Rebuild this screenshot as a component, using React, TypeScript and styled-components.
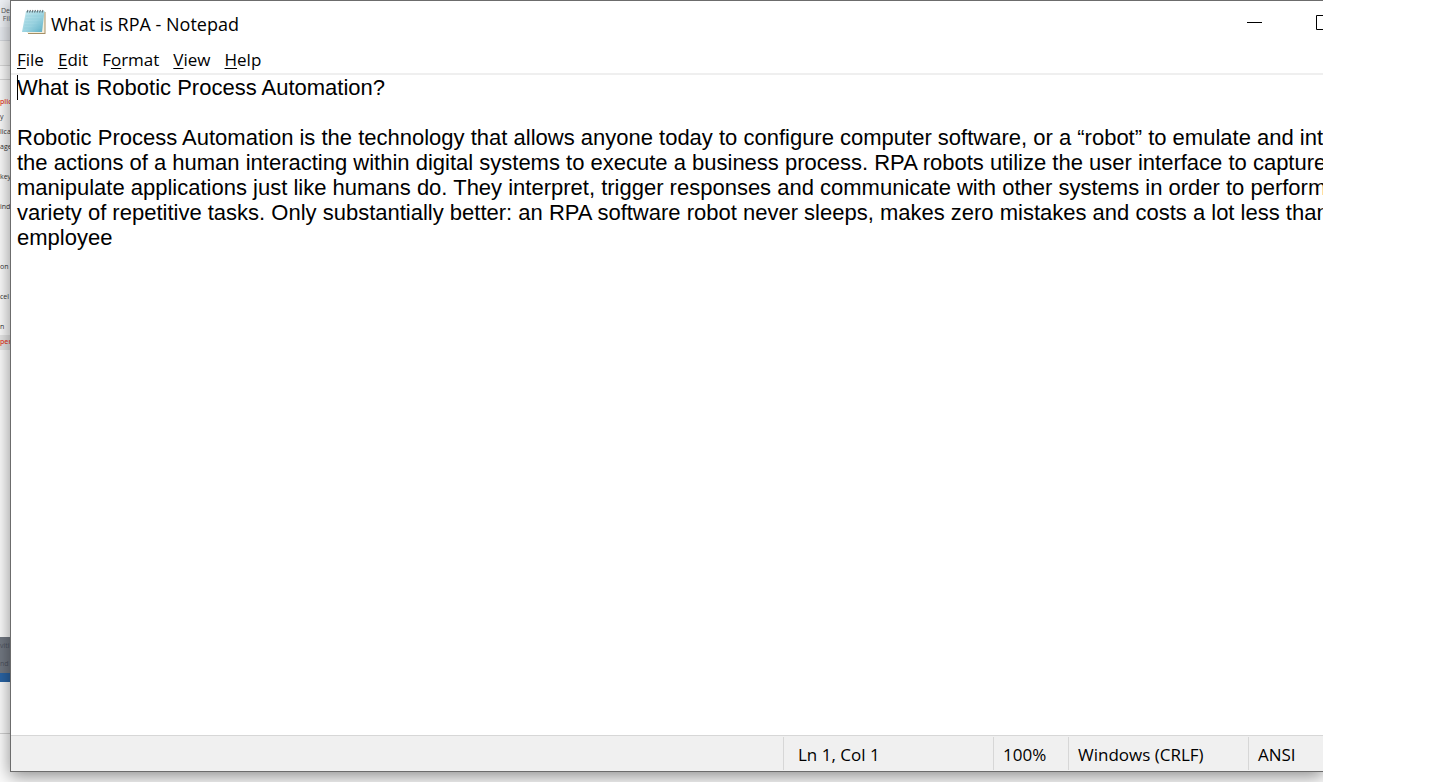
import React from "react";
import styled, { createGlobalStyle } from "styled-components";

const GlobalStyle = createGlobalStyle`
  *, *::before, *::after { box-sizing: border-box; }
  body { margin: 0; background: #fff; font-family: "Open Sans", "Noto Sans", sans-serif; color: #000; }
`;

const Desktop = styled.main`
  display: flex;
  min-height: 100vh;
  margin-right: 117px;
  padding-bottom: 10px;
  overflow: hidden;
  background: #fbfbfb;
`;

const Behind = styled.aside`
  flex: none;
  display: flex;
  flex-direction: column;
  width: 10px;
  margin-bottom: -10px;
  font-size: 7px;
  line-height: 14px;
  color: #333;
`;

const Ribbon = styled.div`
  height: 27px;
  padding-top: 7px;
  background: #eff2f6;
  line-height: 8px;
  text-align: right;
  color: #555;
  white-space: nowrap;
`;

const Strip = styled.div<{ $height: number; $tone?: string; $line?: string }>`
  flex: none;
  height: ${(p) => p.$height}px;
  background: ${(p) => p.$tone ?? "transparent"};
  border-bottom: 1px solid ${(p) => p.$line ?? "transparent"};
`;

const Items = styled.ul`
  flex: 1;
  margin: 0;
  padding: 15px 0 0;
  list-style: none;
`;

const Item = styled.li<{ $alert?: boolean; $active?: boolean }>`
  height: 15px;
  white-space: nowrap;
  color: ${(p) => (p.$alert ? "#e8402c" : "inherit")};
  font-weight: ${(p) => (p.$alert ? 600 : 400)};
  background: ${(p) => (p.$active ? "#e6e6e6" : "transparent")};
`;

const Panel = styled.div`
  flex: none;
  height: 45px;
  border-bottom: 9px solid #2a64a4;
  background: #727882;
  color: #4d535f;
  line-height: 18px;
`;

const Window = styled.section`
  position: relative;
  flex: 1;
  min-width: 0;
  display: flex;
  flex-direction: column;
  border: 1px solid #6c6c6c;
  border-right: 0;
  background: #fff;
  box-shadow: 0 4px 16px rgba(0, 0, 0, 0.45);
`;

const TitleBar = styled.header`
  display: flex;
  align-items: center;
  height: 46px;
  padding-left: 11px;
`;

const AppIcon = styled.svg`
  flex: none;
  align-self: flex-start;
  margin-top: 7px;
`;

const Title = styled.h1`
  flex: 1;
  margin: 0 0 0 4px;
  font-size: 18px;
  line-height: 24px;
  font-weight: 400;
  white-space: nowrap;
`;

const Controls = styled.div`
  align-self: flex-start;
  display: flex;
  width: 103px;
  height: 43px;
  overflow: hidden;
`;

const ControlButton = styled.button`
  flex: none;
  display: flex;
  align-items: center;
  width: 69px;
  padding: 0 0 0 27px;
  border: 0;
  background: transparent;
`;

const MenuBar = styled.nav`
  display: flex;
  gap: 14px;
  height: 28px;
  padding-left: 6px;
  border-bottom: 2px solid #efefef;
`;

const MenuButton = styled.button`
  padding: 0;
  border: 0;
  background: transparent;
  font: inherit;
  font-size: 17px;
  line-height: 26px;
  color: inherit;

  u { text-underline-offset: 2px; text-decoration-thickness: 1px; text-decoration-skip-ink: none; }
`;

const EditorArea = styled.div`
  position: relative;
  flex: 1;
  display: flex;
`;

const Editor = styled.textarea`
  flex: 1;
  min-width: 0;
  padding: 0 0 0 6px;
  border: 0;
  outline: 0;
  resize: none;
  overflow: hidden;
  background: transparent;
  font-family: "Liberation Sans", Arial, sans-serif;
  font-size: 22px;
  line-height: 25px;
  color: #000;
  white-space: pre;
`;

const Caret = styled.span`
  position: absolute;
  left: 6px;
  top: 0;
  width: 1px;
  height: 25px;
  background: #000;
`;

const StatusBar = styled.footer`
  display: flex;
  justify-content: flex-end;
  height: 36px;
  padding: 1px 0;
  border-top: 1px solid #d7d7d7;
  background: #f0f0f0;
`;

const StatusCell = styled.span<{ $width: number; $inset?: number }>`
  flex: none;
  width: ${(p) => p.$width}px;
  padding-left: ${(p) => p.$inset ?? 9}px;
  border-left: 1px solid #d7d7d7;
  font-size: 17px;
  line-height: 35px;
  white-space: nowrap;
`;

const NotepadIcon = () => (
  <AppIcon width="25" height="27" viewBox="0 0 25 27" aria-hidden="true">
    <defs>
      <linearGradient id="page" x1="0" y1="0" x2="1" y2="1">
        <stop offset="0" stopColor="#c4e8ef" />
        <stop offset="0.55" stopColor="#9bd3e0" />
        <stop offset="1" stopColor="#58acc4" />
      </linearGradient>
    </defs>
    <path d="M7 4h16.500v22H6z" fill="#a58f65" />
    <path d="M5 3h17.500v22H5z" fill="#f5efdc" />
    <path d="M4 3h18.500l-2.500 21H0z" fill="url(#page)" />
    <path d="M4 8h17.500M3.500 11h17.500M3 14h17.500M2.500 17h17.500M2 20h17.500" stroke="#86c6d5" strokeWidth=".4" />
    <path d="M5 4.500l1-2.500M7.500 4.500l1-2.500M10 4.500l1-2.500M12.500 4.500l1-2.500M15 4.500l1-2.500M17.500 4.500l1-2.500M20 4.500l1-2.500" stroke="#5f6e74" strokeWidth="1.100" />
  </AppIcon>
);

const sideItems = ["plic", "y", "lica", "age", "", "key", "", "ind", "", "", "", "on", "", "cel", "", "n", "per"];

const menus = [
  ["", "F", "ile"],
  ["", "E", "dit"],
  ["F", "o", "rmat"],
  ["", "V", "iew"],
  ["", "H", "elp"],
];

const documentText = `What is Robotic Process Automation?

Robotic Process Automation is the technology that allows anyone today to configure computer software, or a “robot” to emulate and integrate
the actions of a human interacting within digital systems to execute a business process. RPA robots utilize the user interface to capture data
manipulate applications just like humans do. They interpret, trigger responses and communicate with other systems in order to perform on
variety of repetitive tasks. Only substantially better: an RPA software robot never sleeps, makes zero mistakes and costs a lot less than an
employee`;

export default function App() {
  return (
    <>
      <GlobalStyle />
      <Desktop>
        <Behind>
          <Ribbon>De<br />Fil</Ribbon>
          <Strip $height={14} $tone="#e8ebf0" $line="#d5d8dd" />
          <Strip $height={25} $tone="#f3f3f3" $line="#d8d8d8" />
          <Strip $height={14} $line="#d8d8d8" />
          <Items>
            {sideItems.map((label, i) => (
              <Item key={i} $alert={label === "plic" || label === "per"} $active={label === "per"}>
                {label}
              </Item>
            ))}
          </Items>
          <Panel>viti<br />nd</Panel>
          <Strip $height={52} $line="#d0d0d0" />
          <Strip $height={48} />
        </Behind>
        <Window aria-label="What is RPA - Notepad">
          <TitleBar>
            <NotepadIcon />
            <Title>What is RPA - Notepad</Title>
            <Controls>
              <ControlButton type="button" aria-label="Minimize">
                <svg width="15" height="15" viewBox="0 0 15 15"><path d="M0 7.500h15" stroke="#000" /></svg>
              </ControlButton>
              <ControlButton type="button" aria-label="Maximize">
                <svg width="15" height="15" viewBox="0 0 15 15"><path d="M.5.5h14v14H.5z" fill="none" stroke="#000" /></svg>
              </ControlButton>
            </Controls>
          </TitleBar>
          <MenuBar aria-label="Menu">
            {menus.map(([before, key, after]) => (
              <MenuButton type="button" key={key}>{before}<u>{key}</u>{after}</MenuButton>
            ))}
          </MenuBar>
          <EditorArea>
            <Editor aria-label="Text editor" wrap="off" spellCheck={false} defaultValue={documentText} />
            <Caret />
          </EditorArea>
          <StatusBar>
            <StatusCell $width={210} $inset={14}>Ln 1, Col 1</StatusCell>
            <StatusCell $width={75}>100%</StatusCell>
            <StatusCell $width={180}>Windows (CRLF)</StatusCell>
            <StatusCell $width={75}>ANSI</StatusCell>
          </StatusBar>
        </Window>
      </Desktop>
    </>
  );
}
